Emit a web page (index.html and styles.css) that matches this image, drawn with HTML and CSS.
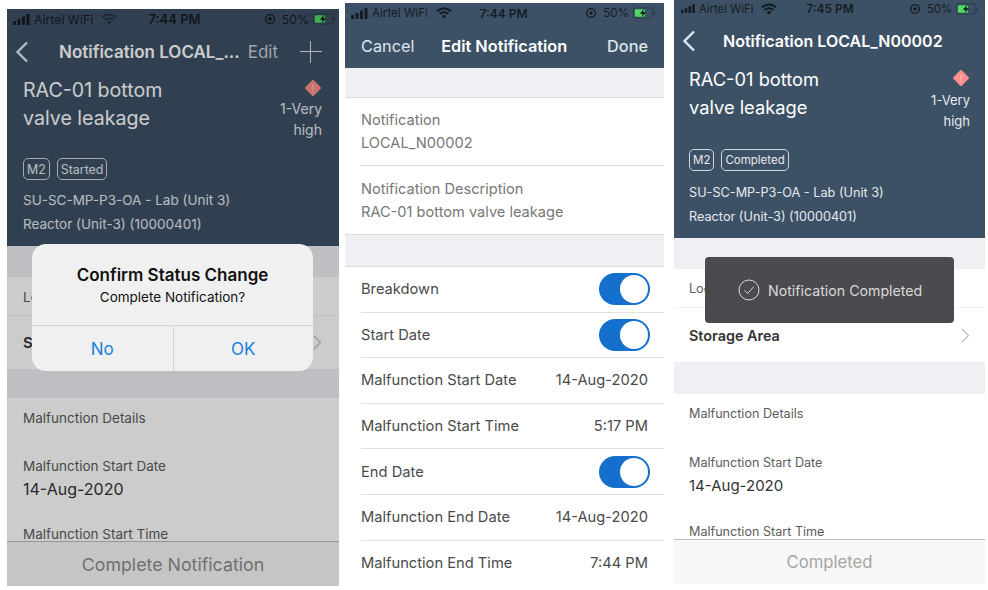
FILE: index.html
```html
<!DOCTYPE html>
<html lang="en">
<head>
<meta charset="utf-8">
<title>Notification screens</title>
<link rel="stylesheet" href="styles.css">
</head>
<body>
<svg class="defs" width="0" height="0" aria-hidden="true">
  <symbol id="bars" viewBox="0 0 18 11"><rect x="0" y="7" width="3" height="4" rx=".7"/><rect x="4.5" y="5" width="3" height="6" rx=".7"/><rect x="9" y="2.5" width="3" height="8.5" rx=".7"/><rect x="13.5" y="0" width="3" height="11" rx=".7"/></symbol>
  <symbol id="wifi" viewBox="0 0 16 12"><path d="M1 4.4a10 10 0 0 1 14 0M3.6 7a6.3 6.3 0 0 1 8.8 0" fill="none" stroke="currentColor" stroke-width="1.9"/><path d="M5.8 9.2a3.1 3.1 0 0 1 4.4 0L8 11.6z"/></symbol>
  <symbol id="alarm" viewBox="0 0 12 12"><circle cx="6" cy="6" r="4.4" fill="none" stroke="currentColor" stroke-width="1.4"/><circle cx="6" cy="6" r="1.8"/></symbol>
  <symbol id="batt" viewBox="0 0 25 12"><rect x=".5" y=".5" width="21" height="11" rx="2.5" fill="none" stroke="currentColor" stroke-opacity=".45"/><rect x="2" y="2" width="11" height="8" rx="1" fill="#4cd964"/><rect x="22.5" y="4" width="1.5" height="4" rx=".7" fill-opacity=".45"/><path d="M12 1.5 7.5 6.8h3L9.5 10.5 14 5.2h-3z" fill="#111"/></symbol>
  <symbol id="back" viewBox="0 0 14 22"><path d="M12 1.5 2.5 11 12 20.5" fill="none" stroke="currentColor" stroke-width="2.4"/></symbol>
  <symbol id="chev" viewBox="0 0 9 15"><path d="M1 1l6.5 6.5L1 14" fill="none" stroke="currentColor" stroke-width="1.2"/></symbol>
  <symbol id="diamond" viewBox="0 0 18 18"><rect x="3" y="3" width="12" height="12" rx="1.2" transform="rotate(45 9 9)" fill="currentColor"/><path d="M9 5.5v5M9 11.8v1" stroke="#fff" stroke-opacity=".55" stroke-width="1.1"/></symbol>
</svg>

<main class="page">
  <!-- Screen 1 -->
  <section class="phone phone-a">
    <header class="head">
      <div class="status">
        <div class="st-left"><svg class="i-bars"><use href="#bars"/></svg><span>Airtel WiFi</span><svg class="i-wifi faint"><use href="#wifi"/></svg></div>
        <b class="st-time">7:44 PM</b>
        <div class="st-right"><svg class="i-alarm"><use href="#alarm"/></svg><span>50%</span><svg class="i-batt"><use href="#batt"/></svg></div>
      </div>
      <nav class="nav">
        <svg class="i-back"><use href="#back"/></svg>
        <strong class="nav-title">Notification LOCAL_...</strong>
        <span class="nav-edit">Edit</span>
        <span class="plus"></span>
      </nav>
      <div class="summary">
        <div class="title-row">
          <h1 class="title">RAC-01 bottom<br>valve leakage</h1>
          <div class="prio"><svg class="i-diamond"><use href="#diamond"/></svg><span>1-Very<br>high</span></div>
        </div>
        <div class="badges"><span class="badge">M2</span><span class="badge">Started</span></div>
        <p class="info">SU-SC-MP-P3-OA - Lab (Unit 3)<br>Reactor (Unit-3) (10000401)</p>
      </div>
    </header>
    <div class="body">
      <div class="band"></div>
      <div class="loc"><span class="label">Location</span></div>
      <div class="area"><b>Storage Area</b><svg class="i-chev"><use href="#chev"/></svg></div>
      <div class="band band2"></div>
      <div class="details">
        <div class="label">Malfunction Details</div>
        <div class="label gap">Malfunction Start Date</div>
        <div class="value">14-Aug-2020</div>
        <div class="label gap2">Malfunction Start Time</div>
      </div>
    </div>
    <footer class="foot">Complete Notification</footer>
    <div class="scrim"></div>
    <div class="dialog">
      <div class="dialog-text"><h2>Confirm Status Change</h2><p>Complete Notification?</p></div>
      <div class="dialog-btns"><span>No</span><span>OK</span></div>
    </div>
  </section>

  <!-- Screen 2 -->
  <section class="phone phone-b">
    <header class="head">
      <div class="status">
        <div class="st-left"><svg class="i-bars"><use href="#bars"/></svg><span>Airtel WiFi</span><svg class="i-wifi"><use href="#wifi"/></svg></div>
        <b class="st-time">7:44 PM</b>
        <div class="st-right"><svg class="i-alarm"><use href="#alarm"/></svg><span>50%</span><svg class="i-batt"><use href="#batt"/></svg></div>
      </div>
      <nav class="nav edit-nav"><span>Cancel</span><strong>Edit Notification</strong><span class="done">Done</span></nav>
    </header>
    <div class="body">
      <div class="band edit-band"></div>
      <div class="group">
        <div class="field"><div class="f-label">Notification</div><div class="f-label">LOCAL_N00002</div></div>
        <div class="field"><div class="f-label">Notification Description</div><div class="f-label">RAC-01 bottom valve leakage</div></div>
      </div>
      <div class="band edit-band2"></div>
      <div class="group">
        <div class="row"><span>Breakdown</span><span class="toggle"></span></div>
        <div class="row"><span>Start Date</span><span class="toggle"></span></div>
        <div class="row"><span>Malfunction Start Date</span><span>14-Aug-2020</span></div>
        <div class="row"><span>Malfunction Start Time</span><span>5:17 PM</span></div>
        <div class="row"><span>End Date</span><span class="toggle"></span></div>
        <div class="row"><span>Malfunction End Date</span><span>14-Aug-2020</span></div>
        <div class="row"><span>Malfunction End Time</span><span>7:44 PM</span></div>
      </div>
    </div>
  </section>

  <!-- Screen 3 -->
  <section class="phone phone-c">
    <header class="head">
      <div class="status">
        <div class="st-left"><svg class="i-bars"><use href="#bars"/></svg><span>Airtel WiFi</span><svg class="i-wifi"><use href="#wifi"/></svg></div>
        <b class="st-time">7:45 PM</b>
        <div class="st-right"><svg class="i-alarm"><use href="#alarm"/></svg><span>50%</span><svg class="i-batt"><use href="#batt"/></svg></div>
      </div>
      <nav class="nav">
        <svg class="i-back"><use href="#back"/></svg>
        <strong class="nav-title">Notification LOCAL_N00002</strong>
      </nav>
      <div class="summary">
        <div class="title-row">
          <h1 class="title">RAC-01 bottom<br>valve leakage</h1>
          <div class="prio"><svg class="i-diamond"><use href="#diamond"/></svg><span>1-Very<br>high</span></div>
        </div>
        <div class="badges"><span class="badge">M2</span><span class="badge">Completed</span></div>
        <p class="info">SU-SC-MP-P3-OA - Lab (Unit 3)<br>Reactor (Unit-3) (10000401)</p>
      </div>
    </header>
    <div class="body">
      <div class="band"></div>
      <div class="loc"><span class="label">Location</span></div>
      <div class="area"><b>Storage Area</b><svg class="i-chev"><use href="#chev"/></svg></div>
      <div class="band band2"></div>
      <div class="details">
        <div class="label">Malfunction Details</div>
        <div class="label gap">Malfunction Start Date</div>
        <div class="value">14-Aug-2020</div>
        <div class="label gap2">Malfunction Start Time</div>
      </div>
    </div>
    <footer class="foot">Completed</footer>
    <div class="toast">
      <svg class="i-check" viewBox="0 0 22 22"><circle cx="11" cy="11" r="10" fill="none" stroke="currentColor"/><path d="M6.5 11.3l3.2 3.2 6-6.8" fill="none" stroke="currentColor"/></svg>
      <span>Notification Completed</span>
    </div>
  </section>
</main>
</body>
</html>
```

FILE: styles.css
```css
* { box-sizing: border-box; }
html, body { margin: 0; padding: 0; background: #fff; }
body { width: 988px; height: 590px; overflow: hidden; font-family: Inter, "Liberation Sans", sans-serif; }
.defs { display: block; }
h1, h2, p { margin: 0; font-weight: 400; }

.page { display: flex; align-items: flex-start; padding-left: 7px; }
.phone { position: relative; display: flex; flex-direction: column; overflow: hidden; background: #fff; flex: none; }
.phone-a { width: 332px; height: 577px; margin-top: 9px; --pad: 16px; }
.phone-b { width: 319px; height: 583px; margin: 3px 0 0 6px; --pad: 16px; }
.phone-c { width: 311px; height: 584px; margin-left: 10px; --pad: 15px; }

/* header */
.head { flex: none; background: #3d5166; color: #fff; }
.status { display: grid; grid-template-columns: 1fr auto 1fr; align-items: center; height: 20px; padding: 0 3px 0 6px; color: #151c24; font-size: 12.3px; }
.phone-b .status { padding-right: 8px; font-size: 11.6px; }
.phone-c .status { height: 17px; padding: 0 6px 0 7px; font-size: 11.3px; }
.st-left, .st-right { display: flex; align-items: center; gap: 3px; }
.st-right { justify-content: flex-end; gap: 4px; }
.st-time { font-weight: 600; font-size: 13px; }
.phone-b .st-time, .phone-c .st-time { font-size: 12px; }
.i-bars { width: 18px; height: 11px; fill: #151c24; }
.phone-c .i-bars { width: 15px; }
.i-wifi { width: 16px; height: 12px; margin-left: 5px; fill: #151c24; color: #151c24; }
.i-wifi.faint { opacity: .55; }
.i-alarm { width: 12px; height: 12px; fill: #151c24; color: #151c24; margin-right: 2px; }
.i-batt { width: 23px; height: 12px; fill: #151c24; color: #151c24; }

.nav { position: relative; display: flex; align-items: center; height: 46px; padding-left: 52px; font-size: 17px; }
.phone-c .nav { height: 47px; padding-left: 49px; font-size: 16px; }
.i-back { position: absolute; left: 8px; top: 50%; width: 14px; height: 22px; margin-top: -11px; color: #dbe7f3; }
.nav-title { font-weight: 600; white-space: nowrap; }
.nav-edit { margin-left: 8px; color: #c8ced6; }
.plus { position: absolute; right: 17px; top: 50%; width: 22px; height: 22px; margin-top: -11px;
  background: linear-gradient(#dfe4ea, #dfe4ea) center / 100% 1.4px no-repeat, linear-gradient(#dfe4ea, #dfe4ea) center / 1.4px 100% no-repeat; }
.edit-nav { justify-content: space-between; height: 45px; padding: 0 16px; font-size: 16.3px; }
.edit-nav span { color: #dde6f0; }
.edit-nav .done { font-weight: 500; }
.edit-nav strong { font-weight: 600; margin-right: 13px; }

.summary { padding: 1px 17px 10px var(--pad); }
.phone-c .summary { padding: 1px 15px 9px var(--pad); }
.title-row { display: flex; justify-content: space-between; align-items: flex-start; height: 56px; }
.title { font-size: 19.6px; line-height: 28px; }
.phone-c .title { font-size: 18.3px; }
.prio { display: flex; flex-direction: column; align-items: flex-end; text-align: right; font-size: 14px; line-height: 20.5px; color: #e6eaee; }
.phone-c .prio { font-size: 13px; }
.i-diamond { width: 18px; height: 18px; margin: 3px 0 2px; color: #ff8f8c; }
.phone-c .i-diamond { margin: 4px 0 3px; }
.badges { display: flex; gap: 7px; margin-top: 26px; }
.phone-c .badges { margin-top: 28px; }
.badge { display: flex; align-items: center; height: 22px; padding: 0 3px; border: 1px solid #cfd6dd; border-radius: 5px; font-size: 12.4px; color: #e6eaee; }
.phone-c .badge { font-size: 11.5px; }
.info { margin-top: 8px; font-size: 13.5px; line-height: 24px; color: #e6eaee; }
.phone-c .info { margin-top: 10px; font-size: 12.7px; }

/* body */
.body { flex: 1; min-height: 0; overflow: hidden; color: #555; }
.band { height: 31px; background: #efeff4; }
.band2 { height: 29px; }
.phone-c .band2 { height: 32px; }
.loc { display: flex; align-items: center; height: 39px; padding: 2px 0 0 var(--pad); border-bottom: 1px solid #f1f1f1; }
.area { display: flex; align-items: center; justify-content: space-between; height: 53px; padding: 0 17px 0 var(--pad); }
.phone-c .area { height: 54px; padding-right: 15px; }
.area b { font-size: 15px; font-weight: 600; color: #333; }
.phone-c .area b { font-size: 14.4px; }
.i-chev { width: 9px; height: 15px; color: #bbb; }
.details { padding: 10px var(--pad) 0; }
.label { font-size: 13.5px; line-height: 20px; color: #5c5c5c; }
.phone-c .label { font-size: 12.6px; }
.gap { margin-top: 28px; }
.gap2 { margin-top: 24px; }
.phone-c .gap { margin-top: 29px; }
.phone-c .gap2 { margin-top: 25px; }
.value { margin-top: 2px; font-size: 16px; line-height: 22px; color: #333; }
.phone-c .value { font-size: 15px; }
.foot { flex: none; display: flex; align-items: center; justify-content: center; height: 45px; background: #f7f7f7; border-top: 1px solid #bdbdbd; font-size: 17.8px; color: #8a8a8a; }
.phone-c .foot { color: #a5a5a5; font-size: 16.7px; }
.phone-a .foot { color: #8c8c8c; }

/* edit form */
.edit-band { height: 30px; border-bottom: 1px solid #dcdcdc; }
.edit-band2 { height: 33px; border-top: 1px solid #dcdcdc; border-bottom: 1px solid #dcdcdc; }
.group { background: #fff; }
.field { height: 68px; margin-left: 16px; padding-top: 11px; border-bottom: 1px solid #dedede; }
.field + .field { height: 68px; padding-top: 12px; border-bottom: 0; }
.f-label { font-size: 14.6px; line-height: 23px; color: #777; }
.row { display: flex; align-items: center; justify-content: space-between; height: 45.6px; margin-left: 16px; padding-right: 16px; border-bottom: 1px solid #e0e0e0; font-size: 14.7px; color: #4a4a4a; }
.row:last-child { border-bottom: 0; }
.toggle { position: relative; width: 51px; height: 32px; margin-right: -2px; border-radius: 16px; background: #1470cc; }
.toggle::after { content: ""; position: absolute; right: 2px; top: 2px; width: 28px; height: 28px; border-radius: 50%; background: #fff; }

/* overlays */
.scrim { position: absolute; inset: 0; background: rgba(0, 0, 0, .2); }
.dialog { position: absolute; left: 25px; top: 235px; width: 281px; height: 127px; border-radius: 14px; background: #f0f0f0; color: #111; }
.dialog-text { height: 82px; padding-top: 19px; text-align: center; border-bottom: 1px solid #d4d4d4; }
.dialog-text h2 { font-size: 17px; line-height: 24px; font-weight: 600; }
.dialog-text p { font-size: 13.5px; line-height: 20px; }
.dialog-btns { display: grid; grid-template-columns: 1fr 1fr; height: 45px; font-size: 17px; color: #1a80e2; }
.dialog-btns span { display: flex; align-items: center; justify-content: center; }
.dialog-btns span + span { border-left: 1px solid #d4d4d4; }
.toast { position: absolute; left: 31px; top: 257px; display: flex; align-items: center; gap: 8px; width: 249px; height: 66px; padding-left: 33px; border-radius: 4px; background: #4b4b4f; color: #d9d9d9; font-size: 14.2px; }
.i-check { width: 22px; height: 22px; }
```
